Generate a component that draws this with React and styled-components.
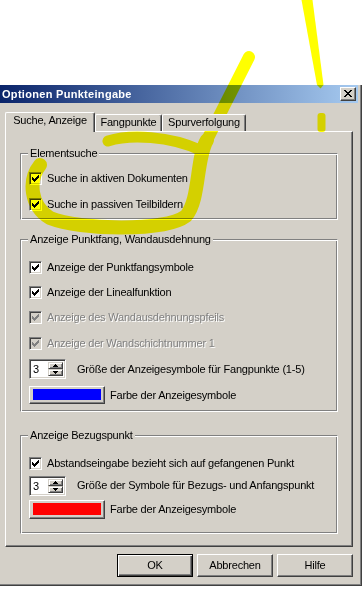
import React from 'react';
import styled, { createGlobalStyle } from 'styled-components';

const GlobalStyle = createGlobalStyle`
  html, body { margin: 0; padding: 0; background: #fff; }
  body {
    font-family: "Liberation Sans", Arial, sans-serif;
    font-size: 11px;
    letter-spacing: -0.2px;
    color: #000;
  }
  * { box-sizing: border-box; }
`;

const Page = styled.div`
  position: relative;
  width: 362px;
  height: 590px;
  overflow: hidden;
  padding-top: 85px;
`;

const Window = styled.div`
  width: 362px;
  background: #d4d0c8;
  border-right: 1px solid #404040;
  border-bottom: 1px solid #404040;
  box-shadow: inset -1px -1px #808080;
  padding-right: 3px;
`;

const TitleBar = styled.div`
  height: 18px;
  display: flex;
  align-items: center;
  justify-content: space-between;
  padding: 0 2px 0 2px;
  background: linear-gradient(to right, #0a246a, #a6caf0);
  color: #fff;
  font-weight: bold;
  font-size: 11px;
  letter-spacing: 0.3px;
  line-height: 13px;
`;

const CloseButton = styled.div`
  width: 16px;
  height: 14px;
  background: #d4d0c8;
  border: 1px solid;
  border-color: #fff #404040 #404040 #fff;
  box-shadow: inset -1px -1px #808080;
  display: flex;
  align-items: center;
  justify-content: center;
  padding: 0 1px 1px 0;
`;

const Body = styled.div`
  padding: 9px 5px 8px 5px;
`;

const TabStrip = styled.div`
  display: flex;
  align-items: flex-end;
  height: 19px;
  position: relative;
  z-index: 1;
`;

const Tab = styled.div`
  width: ${(p) => p.w}px;
  height: ${(p) => (p.active ? 20 : 17)}px;
  margin-bottom: ${(p) => (p.active ? -1 : 0)}px;
  background: #d4d0c8;
  border-left: 1px solid #fff;
  border-top: 1px solid #fff;
  border-right: 1px solid #404040;
  box-shadow: inset -1px 0 #808080;
  border-top-left-radius: 2px;
  border-top-right-radius: 2px;
  display: flex;
  align-items: center;
  justify-content: center;
  padding-bottom: ${(p) => (p.active ? 5 : 2)}px;
  line-height: 13px;
  white-space: nowrap;
`;

const Panel = styled.div`
  height: 416px;
  border: 1px solid;
  border-color: #fff #404040 #404040 #fff;
  box-shadow: inset -1px -1px #808080;
  padding: 21px 14px 0 14px;
  display: flex;
  flex-direction: column;
`;

const Group = styled.div`
  position: relative;
  border: 1px solid;
  border-color: #808080 #fff #fff #808080;
  box-shadow: inset 1px 1px #fff, inset -1px -1px #808080;
  margin-top: ${(p) => p.mt}px;
  padding: ${(p) => p.pt}px 8px ${(p) => p.pb}px 8px;
`;

const Legend = styled.span`
  position: absolute;
  top: -7px;
  left: 7px;
  padding: 0 2px;
  line-height: 13px;
  background: #d4d0c8;
  white-space: nowrap;
`;

const Row = styled.div`
  display: flex;
  align-items: center;
  height: ${(p) => p.h}px;
  white-space: nowrap;
`;

const Box = styled.span`
  flex: none;
  width: 13px;
  height: 13px;
  border: 1px solid;
  border-color: #808080 #fff #fff #808080;
  box-shadow: inset 1px 1px #404040, inset -1px -1px #d4d0c8;
  background: ${(p) => (p.disabled ? '#d4d0c8' : '#fff')};
  display: flex;
  align-items: center;
  justify-content: center;
  margin-right: 5px;
`;

const Label = styled.span`
  line-height: 13px;
  color: ${(p) => (p.disabled ? '#808080' : '#000')};
  text-shadow: ${(p) => (p.disabled ? '1px 1px 0 #fff' : 'none')};
  margin-left: ${(p) => p.ml || 0}px;
`;

const Spin = styled.span`
  flex: none;
  width: 37px;
  height: 20px;
  display: flex;
  background: #fff;
  border: 1px solid;
  border-color: #808080 #fff #fff #808080;
  box-shadow: inset 1px 1px #404040, inset -1px -1px #d4d0c8;
  padding: 2px 2px 2px 2px;
`;

const SpinValue = styled.span`
  flex: 1;
  padding-left: 1px;
  line-height: 14px;
`;

const SpinButtons = styled.span`
  width: 15px;
  display: flex;
  flex-direction: column;
`;

const SpinButton = styled.span`
  flex: 1;
  background: #d4d0c8;
  border: 1px solid;
  border-color: #d4d0c8 #404040 #404040 #d4d0c8;
  box-shadow: inset 1px 1px #fff, inset -1px -1px #808080;
  display: flex;
  align-items: center;
  justify-content: center;
`;

const ColorButton = styled.span`
  flex: none;
  width: 76px;
  height: ${(p) => p.h}px;
  background: #d4d0c8;
  border: 1px solid;
  border-color: #fff #404040 #404040 #fff;
  box-shadow: inset -1px -1px #808080;
  padding: 2px 3px 3px 3px;
  display: flex;
`;

const Swatch = styled.span`
  flex: 1;
  background: ${(p) => p.color};
`;

const ButtonRow = styled.div`
  display: flex;
  justify-content: flex-end;
  gap: 4px;
  margin-top: 7px;
`;

const DlgButton = styled.div`
  width: 76px;
  height: 23px;
  background: #d4d0c8;
  border: 1px solid;
  border-color: ${(p) => (p.def ? '#000' : '#fff #404040 #404040 #fff')};
  box-shadow: ${(p) =>
    p.def
      ? 'inset 1px 1px #fff, inset -1px -1px #404040, inset -2px -2px #808080'
      : 'inset -1px -1px #808080'};
  display: flex;
  align-items: center;
  justify-content: center;
  line-height: 13px;
`;

const Overlay = styled.svg`
  position: absolute;
  left: 0;
  top: 0;
  width: 362px;
  height: 590px;
  pointer-events: none;
  mix-blend-mode: multiply;
`;

const CheckMark = ({ color }) => (
  <svg width="7" height="7" viewBox="0 0 7 7" shapeRendering="crispEdges">
    <path
      fill={color}
      d="M6 0h1v1h-1z M5 1h2v1h-2z M0 2h1v1h-1z M4 2h3v1h-3z M0 3h2v1h-2z M3 3h3v1h-3z M0 4h5v1h-5z M1 5h3v1h-3z M2 6h1v1h-1z"
    />
  </svg>
);

const CloseGlyph = () => (
  <svg width="8" height="7" viewBox="0 0 8 7" shapeRendering="crispEdges">
    <path
      fill="#000"
      d="M0 0h2v1h-2z M6 0h2v1h-2z M1 1h2v1h-2z M5 1h2v1h-2z M2 2h4v1h-4z M3 3h2v1h-2z M2 4h4v1h-4z M1 5h2v1h-2z M5 5h2v1h-2z M0 6h2v1h-2z M6 6h2v1h-2z"
    />
  </svg>
);

const Arrow = ({ up }) => (
  <svg width="5" height="3" viewBox="0 0 5 3" shapeRendering="crispEdges">
    <path
      fill="#000"
      d={up ? 'M2 0h1v1h-1z M1 1h3v1h-3z M0 2h5v1h-5z' : 'M0 0h5v1h-5z M1 1h3v1h-3z M2 2h1v1h-1z'}
    />
  </svg>
);

const Check = ({ label, disabled, h }) => (
  <Row h={h}>
    <Box disabled={disabled}>
      <CheckMark color={disabled ? '#808080' : '#000'} />
    </Box>
    <Label disabled={disabled}>{label}</Label>
  </Row>
);

const SpinRow = ({ value, label, h }) => (
  <Row h={h}>
    <Spin>
      <SpinValue>{value}</SpinValue>
      <SpinButtons>
        <SpinButton>
          <Arrow up />
        </SpinButton>
        <SpinButton>
          <Arrow />
        </SpinButton>
      </SpinButtons>
    </Spin>
    <Label ml={11}>{label}</Label>
  </Row>
);

const ColorRow = ({ color, label, h, bh }) => (
  <Row h={h}>
    <ColorButton h={bh}>
      <Swatch color={color} />
    </ColorButton>
    <Label ml={5}>{label}</Label>
  </Row>
);

export default function App() {
  return (
    <>
      <GlobalStyle />
      <Page>
        <Window>
          <TitleBar>
            <span>Optionen Punkteingabe</span>
            <CloseButton>
              <CloseGlyph />
            </CloseButton>
          </TitleBar>
          <Body>
            <TabStrip>
              <Tab w={90} active>
                Suche, Anzeige
              </Tab>
              <Tab w={67}>Fangpunkte</Tab>
              <Tab w={84}>Spurverfolgung</Tab>
            </TabStrip>
            <Panel>
              <Group mt={0} pt={11} pb={2}>
                <Legend>Elementsuche</Legend>
                <Check h={26} label="Suche in aktiven Dokumenten" />
                <Check h={26} label="Suche in passiven Teilbildern" />
              </Group>
              <Group mt={19} pt={15} pb={3}>
                <Legend>Anzeige Punktfang, Wandausdehnung</Legend>
                <Check h={25} label="Anzeige der Punktfangsymbole" />
                <Check h={25} label="Anzeige der Linealfunktion" />
                <Check h={25} disabled label="Anzeige des Wandausdehnungspfeils" />
                <Check h={26} disabled label="Anzeige der Wandschichtnummer 1" />
                <SpinRow h={26} value="3" label="Größe der Anzeigesymbole für Fangpunkte (1-5)" />
                <ColorRow h={26} bh={18} color="#0000ff" label="Farbe der Anzeigesymbole" />
              </Group>
              <Group mt={23} pt={15} pb={11}>
                <Legend>Anzeige Bezugspunkt</Legend>
                <Check h={24} label="Abstandseingabe bezieht sich auf gefangenen Punkt" />
                <SpinRow h={21} value="3" label="Größe der Symbole für Bezugs- und Anfangspunkt" />
                <ColorRow h={26} bh={19} color="#ff0000" label="Farbe der Anzeigesymbole" />
              </Group>
            </Panel>
            <ButtonRow>
              <DlgButton def>OK</DlgButton>
              <DlgButton>Abbrechen</DlgButton>
              <DlgButton>Hilfe</DlgButton>
            </ButtonRow>
          </Body>
        </Window>
        <Overlay viewBox="0 0 362 590">
          <g fill="#ffff00" stroke="none">
            <polygon points="301.5,0 312.5,0 323.5,85 320.5,88.5 317,85" />
            <rect x="317.5" y="113" width="8" height="19" rx="3" />
          </g>
          <g fill="none" stroke="#ffff00" strokeLinecap="round" strokeLinejoin="round">
            <path strokeWidth="12" d="M249 57 L207 140" />
            <path
              strokeWidth="14"
              d="M207 140 C196 158 200 200 186 216 C165 232 80 230 50 218 C30 206 28 180 40 165"
            />
            <path strokeWidth="11" d="M108 141 C130 134 170 136 200 150" />
          </g>
        </Overlay>
      </Page>
    </>
  );
}
